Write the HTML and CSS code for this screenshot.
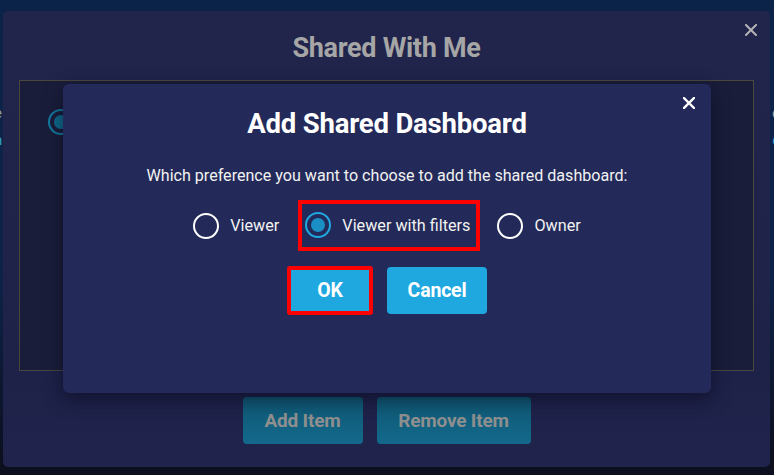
FILE: index.html
```html
<!DOCTYPE html>
<html lang="en">
<head>
<meta charset="utf-8">
<title>Shared With Me</title>
<link rel="stylesheet" href="styles.css">
</head>
<body>
<div class="backdrop-text">
  <span class="edge left-e">e</span>
  <span class="edge left-n">n</span>
  <span class="edge right-e">e</span>
  <span class="edge right-c">c</span>
</div>
<div class="modal">
  <button class="close outer-close" aria-label="Close">
    <svg width="12" height="12" viewBox="0 0 12 12"><path d="M1 1L11 11M11 1L1 11" stroke="currentColor" stroke-width="2" stroke-linecap="square"/></svg>
  </button>
  <h1 class="modal-title">Shared With Me</h1>
  <div class="list-box">
    <div class="list-row">
      <span class="list-radio"></span>
    </div>
  </div>
  <div class="modal-actions">
    <button class="dim-btn add-btn">Add Item</button>
    <button class="dim-btn remove-btn">Remove Item</button>
  </div>

  <div class="dialog">
    <button class="close dialog-close" aria-label="Close">
      <svg width="12" height="12" viewBox="0 0 12 12"><path d="M1 1L11 11M11 1L1 11" stroke="currentColor" stroke-width="2.4" stroke-linecap="square"/></svg>
    </button>
    <h2 class="dialog-title">Add Shared Dashboard</h2>
    <p class="dialog-text">Which preference you want to choose to add the shared dashboard:</p>
    <div class="options">
      <label class="option"><span class="radio"></span><span class="opt-label">Viewer</span></label>
      <label class="option highlight"><span class="radio checked"></span><span class="opt-label">Viewer with filters</span></label>
      <label class="option"><span class="radio"></span><span class="opt-label">Owner</span></label>
    </div>
    <div class="dialog-actions">
      <button class="btn ok-btn">OK</button>
      <button class="btn cancel-btn">Cancel</button>
    </div>
  </div>
</div>
</body>
</html>
```
FILE: styles.css
```css
* { box-sizing: border-box; }
html, body { margin: 0; padding: 0; }
body {
  width: 774px;
  height: 475px;
  overflow: hidden;
  background: linear-gradient(#0c2349 0%, #0d2248 60%, #0c0f1d 98.5%);
  font-family: Roboto, "Liberation Sans", sans-serif;
  position: relative;
  padding: 11px 4px 8px 3px;
}
.backdrop-text { position: absolute; inset: 0; pointer-events: none; }
.edge { position: absolute; font-size: 15px; color: #9a9a9a; }
.left-e { left: -6px; top: 104px; }
.left-n { left: -6px; top: 131px; color: #2fa0c8; }
.right-e { right: -6px; top: 104px; }
.right-c { right: -6px; top: 131px; color: #2fa0c8; }

.modal {
  position: relative;
  height: 456px;
  background: linear-gradient(#21244b, #1e2148 80%, #20234b);
  border-radius: 5px;
  display: flex;
  flex-direction: column;
  align-items: center;
  padding: 0 16px 0 16px;
}
.close {
  background: none;
  border: 0;
  padding: 0;
  position: absolute;
  display: flex;
  cursor: pointer;
}
.outer-close { top: 13px; right: 13px; color: #b4b4b4; }
.modal-title {
  margin: 22px 0 0;
  height: 47px;
  font-size: 27px;
  font-weight: 700;
  color: #a6a6a6;
  line-height: 30px;
  letter-spacing: -0.3px;
}
.list-box {
  align-self: stretch;
  height: 291px;
  border: 1px solid #4a483d;
  background: #1a1d3a;
  padding: 28px 0 0 28px;
}
.list-radio {
  display: block;
  width: 26px;
  height: 26px;
  border-radius: 50%;
  border: 2px solid #137aa0;
  position: relative;
}
.list-radio::after {
  content: "";
  position: absolute;
  inset: 4px;
  border-radius: 50%;
  background: #0f6a8c;
}
.modal-actions {
  margin-top: 26px;
  display: flex;
  gap: 14px;
}
.dim-btn {
  height: 47px;
  border: 0;
  border-radius: 4px;
  background: linear-gradient(#0f5671, #13698c);
  color: #8f8f8f;
  font-family: inherit;
  font-size: 19px;
  font-weight: 700;
  padding: 0;
  letter-spacing: -0.2px;
}
.add-btn { width: 120px; }
.remove-btn { width: 154px; }

.dialog {
  position: absolute;
  left: 60px;
  top: 73px;
  width: 648px;
  height: 309px;
  background: #232a59;
  border-radius: 6px;
  box-shadow: 0 6px 18px rgba(5, 8, 25, 0.55);
  display: flex;
  flex-direction: column;
  align-items: center;
  color: #fff;
}
.dialog-close { top: 13px; right: 16px; color: #ffffff; }
.dialog-title {
  margin: 24px 0 0;
  font-size: 27.5px;
  font-weight: 700;
  line-height: 32px;
  letter-spacing: -0.2px;
}
.dialog-text {
  margin: 26px 0 0;
  font-size: 16.1px;
  line-height: 19px;
  color: #f2f2f2;
}
.options {
  margin-top: 15px;
  display: flex;
  align-items: center;
  gap: 19px;
}
.option {
  display: flex;
  align-items: center;
  gap: 11px;
  font-size: 16.2px;
  color: #f2f2f2;
}
.option.highlight {
  border: 4px solid #ff0000;
  padding: 8px 6px 9px 3px;
  margin: 0 -2px 0 0;
}
.radio {
  width: 26px;
  height: 26px;
  border-radius: 50%;
  border: 2px solid #ffffff;
  position: relative;
  flex: none;
}
.radio.checked { border-color: #1fa8e0; }
.radio.checked::after {
  content: "";
  position: absolute;
  inset: 4px;
  border-radius: 50%;
  background: #1a8fc4;
}
.dialog-actions {
  margin-top: 15px;
  display: flex;
  gap: 14px;
  align-items: flex-start;
}
.btn {
  height: 47px;
  border: 0;
  border-radius: 4px;
  background: #1fa8e0;
  color: #fff;
  font-family: inherit;
  font-size: 19.5px;
  font-weight: 700;
  padding: 0;
  letter-spacing: -0.2px;
}
.ok-btn {
  width: 86px;
  height: 49px;
  border: 4px solid #ff0000;
  border-radius: 3px;
}
.cancel-btn { width: 100px; margin-top: 1px; }
```
